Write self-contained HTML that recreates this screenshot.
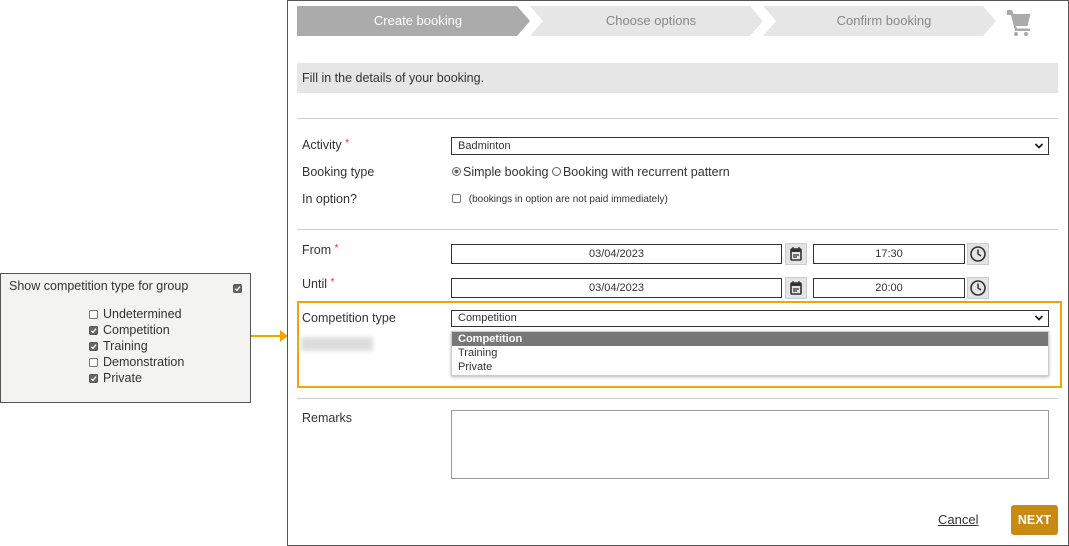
<!DOCTYPE html>
<html><head><meta charset="utf-8"><style>
*{box-sizing:border-box;margin:0;padding:0}
body{width:1069px;height:546px;background:#fff;position:relative;overflow:hidden;font-family:"Liberation Sans",sans-serif;color:#333;font-size:12px}
.a{position:absolute}
.frame{left:287px;top:0;width:782px;height:546px;border:1px solid #555}
.inp{position:absolute;border:1px solid #333;background:#fff;height:20px;font-size:11px;line-height:18px}
.lbl{position:absolute;left:302px;font-size:12.5px;color:#333}
.req{color:#d33;font-size:10px;vertical-align:top}
.hr{position:absolute;left:297px;width:761px;height:1px;background:#ccc}
.ib{position:absolute;width:22px;height:22px;background:#e4e4e4;border:1px solid #ccc}
.cb{display:inline-block;width:9px;height:9px;border:1px solid #777;border-radius:2px;background:#fff;vertical-align:-1px;margin-right:5px;position:relative}
.cb.on{background:#666;border-color:#555}
.cb svg{position:absolute;left:0;top:0}
.chev{position:absolute;right:4px;top:4px}
</style></head><body>
<div class="a" style="left:0;top:273px;width:251px;height:130px;border:1px solid #555;background:#f3f3f1"></div>
<div class="a" style="left:9px;top:279px;font-size:12.5px;color:#333">Show competition type for group</div>
<div class="a" style="left:233px;top:281px"><span class="cb on"><svg width="7" height="7"><path d="M1.2 3.8L3 5.4L6 1.6" fill="none" stroke="#fff" stroke-width="1.3"/></svg></span></div>
<div class="a" style="left:89px;top:306px;font-size:12.5px;line-height:16px;color:#333">
<div><span class="cb"></span>Undetermined</div>
<div><span class="cb on"><svg width="7" height="7"><path d="M1.2 3.8L3 5.4L6 1.6" fill="none" stroke="#fff" stroke-width="1.3"/></svg></span>Competition</div>
<div><span class="cb on"><svg width="7" height="7"><path d="M1.2 3.8L3 5.4L6 1.6" fill="none" stroke="#fff" stroke-width="1.3"/></svg></span>Training</div>
<div><span class="cb"></span>Demonstration</div>
<div><span class="cb on"><svg width="7" height="7"><path d="M1.2 3.8L3 5.4L6 1.6" fill="none" stroke="#fff" stroke-width="1.3"/></svg></span>Private</div>
</div>
<div class="a" style="left:251px;top:335px;width:30px;height:2px;background:#f0a500"></div>
<svg class="a" style="left:280px;top:330px" width="10" height="12"><path d="M0 0L8 6L0 12Z" fill="#f0a500"/></svg>

<div class="a frame"></div>
<svg class="a" style="left:297px;top:6px" width="745" height="31">
<path d="M0 0H220L233 15L220 30H0Z" fill="#ababab"/>
<path d="M233 0H453L466 15L453 30H233L246 15Z" fill="#e6e6e6"/>
<path d="M466 0H686L699 15L686 30H466L479 15Z" fill="#e6e6e6"/>
<g fill="#aaa"><path d="M710 4h5l1.5 4h17l-3 12h-11.5l1 2.5h13v2.5h-15l-4-16h-4z"/><circle cx="719" cy="28" r="2"/><circle cx="729" cy="28" r="2"/></g>
<text x="121" y="19" fill="#fff" font-size="13" text-anchor="middle" font-family="Liberation Sans">Create booking</text>
<text x="354" y="19" fill="#888" font-size="13" text-anchor="middle" font-family="Liberation Sans">Choose options</text>
<text x="587" y="19" fill="#888" font-size="13" text-anchor="middle" font-family="Liberation Sans">Confirm booking</text>
</svg>
<div class="a" style="left:297px;top:63px;width:761px;height:30px;background:#e6e6e6;padding:8px 5px;font-size:12.5px">Fill in the details of your booking.</div>
<div class="hr" style="top:118px"></div>
<div class="lbl" style="top:138px">Activity <span class="req">*</span></div>
<div class="inp" style="left:451px;top:137px;width:598px;height:18px;line-height:16px;padding-left:6px">Badminton<svg class="chev" width="10" height="8"><path d="M1.5 2L5 5.5L8.5 2" fill="none" stroke="#222" stroke-width="1.8"/></svg></div>
<div class="lbl" style="top:165px">Booking type</div>
<div class="a" style="left:452px;top:165px;font-size:12.5px"><span style="display:inline-block;width:9px;height:9px;border:1px solid #666;border-radius:50%;background:radial-gradient(#666 35%,#fff 45%);margin-right:2px"></span>Simple booking <span style="display:inline-block;width:9px;height:9px;border:1px solid #666;border-radius:50%;margin-right:2px"></span>Booking with recurrent pattern</div>
<div class="lbl" style="top:192px">In option?</div>
<div class="a" style="left:452px;top:194px;font-size:10px"><span class="cb"></span>&nbsp;(bookings in option are not paid immediately)</div>
<div class="hr" style="top:229px"></div>
<div class="lbl" style="top:243px">From <span class="req">*</span></div>
<div class="lbl" style="top:277px">Until <span class="req">*</span></div>
<div class="inp" style="left:451px;top:244px;width:331px;text-align:center;line-height:19px">03/04/2023</div>
<div class="inp" style="left:451px;top:278px;width:331px;text-align:center;line-height:19px">03/04/2023</div>
<div class="inp" style="left:813px;top:244px;width:152px;text-align:center;line-height:19px">17:30</div>
<div class="inp" style="left:813px;top:278px;width:152px;text-align:center;line-height:19px">20:00</div>
<div class="ib" style="left:785px;top:243px"></div><div class="ib" style="left:785px;top:277px"></div>
<div class="ib" style="left:967px;top:243px"></div><div class="ib" style="left:967px;top:277px"></div>
<svg class="a" style="left:789px;top:246px" width="14" height="16"><rect x="2" y="3" width="10" height="11" rx="1" fill="none" stroke="#333" stroke-width="1.6"/><rect x="2" y="3" width="10" height="3" fill="#333"/><path d="M4 1v3M10 1v3M4 9h6M4 11h4" stroke="#333" stroke-width="1.3"/></svg>
<svg class="a" style="left:789px;top:280px" width="14" height="16"><rect x="2" y="3" width="10" height="11" rx="1" fill="none" stroke="#333" stroke-width="1.6"/><rect x="2" y="3" width="10" height="3" fill="#333"/><path d="M4 1v3M10 1v3M4 9h6M4 11h4" stroke="#333" stroke-width="1.3"/></svg>
<svg class="a" style="left:969px;top:245px" width="18" height="18"><circle cx="9" cy="9" r="7" fill="none" stroke="#333" stroke-width="1.6"/><path d="M9 4.5V9l3 2" fill="none" stroke="#333" stroke-width="1.5"/></svg>
<svg class="a" style="left:969px;top:279px" width="18" height="18"><circle cx="9" cy="9" r="7" fill="none" stroke="#333" stroke-width="1.6"/><path d="M9 4.5V9l3 2" fill="none" stroke="#333" stroke-width="1.5"/></svg>
<div class="a" style="left:297px;top:301px;width:765px;height:87px;border:2px solid #f0a500"></div>
<div class="lbl" style="top:311px">Competition type</div>
<div class="inp" style="left:451px;top:310px;width:598px;height:17px;line-height:15px;padding-left:6px">Competition<svg class="chev" width="10" height="8" style="top:3px"><path d="M1.5 2L5 5.5L8.5 2" fill="none" stroke="#222" stroke-width="1.8"/></svg></div>
<div class="a" style="left:301px;top:337px;width:72px;height:14px;background:#ddd;filter:blur(2px)"></div>
<div class="a" style="left:451px;top:331px;width:598px;height:45px;background:#fff;border:1px solid #ccc;box-shadow:0 1px 3px rgba(0,0,0,.3);font-size:11px;line-height:14px">
<div style="background:#777;color:#fff;padding-left:6px;font-weight:bold">Competition</div>
<div style="padding-left:6px">Training</div><div style="padding-left:6px">Private</div></div>
<div class="hr" style="top:398px"></div>
<div class="lbl" style="top:411px">Remarks</div>
<div class="a" style="left:451px;top:410px;width:598px;height:69px;border:1px solid #999"></div>
<div class="a" style="left:938px;top:512px;font-size:13px;text-decoration:underline;color:#333">Cancel</div>
<div class="a" style="left:1011px;top:505px;width:47px;height:30px;background:#c98a12;border-radius:3px;color:#fff;font-weight:bold;font-size:12.5px;text-align:center;line-height:30px">NEXT</div>
</body></html>
